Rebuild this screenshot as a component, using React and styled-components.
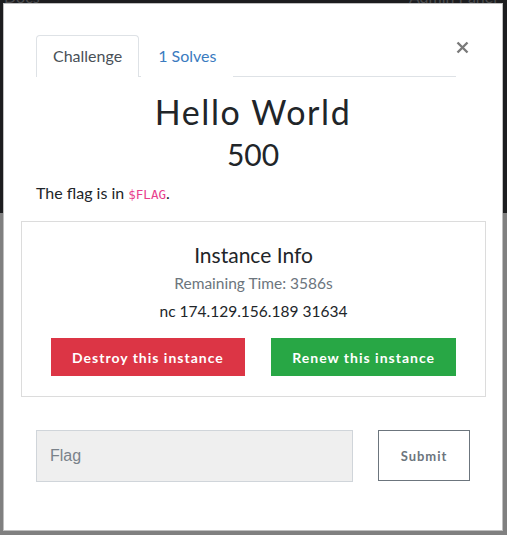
import React from 'react'
import styled, { createGlobalStyle } from 'styled-components'

const GlobalStyle = createGlobalStyle`
  html, body {
    margin: 0;
    padding: 0;
    background: #808080;
  }
  body {
    font-family: Lato, "Noto Sans", sans-serif;
    color: #212529;
  }
`

const Page = styled.div`
  position: relative;
  width: 507px;
  height: 535px;
  overflow: hidden;
  display: flex;
  flex-direction: column;
`

const Hero = styled.div`
  height: 213px;
  background: #1c1d1f;
  display: flex;
  justify-content: space-between;
  align-items: flex-start;
  padding: 0 10px 0 0;
  box-sizing: border-box;
`

const NavText = styled.span`
  font-size: 16px;
  line-height: 16px;
  margin-top: -11px;
  color: #4a4b4d;
  margin-left: ${(p) => p.left || 0}px;
`

const Rest = styled.div`
  flex: 1;
  background: #808080;
`

const Modal = styled.div`
  position: absolute;
  left: 3px;
  top: 3px;
  width: 500px;
  height: 528px;
  box-sizing: border-box;
  background: #fff;
  border: 1px solid rgba(0, 0, 0, 0.25);
  padding: 31px 32px 0 32px;
  display: flex;
  flex-direction: column;
`

const Header = styled.div`
  display: flex;
  align-items: flex-start;
`

const Tabs = styled.div`
  flex: 1;
  display: flex;
  border-bottom: 1px solid #dee2e6;
`

const Tab = styled.div`
  padding: 10px 16px 11px;
  line-height: 20px;
  font-size: 16px;
  border: 1px solid ${(p) => (p.active ? '#dee2e6' : 'transparent')};
  border-bottom: none;
  border-radius: 4px 4px 0 0;
  color: ${(p) => (p.active ? '#495057' : '#3a7bbf')};
  background: #fff;
  margin-bottom: -1px;
  margin-left: ${(p) => (p.active ? 0 : 2)}px;
`

const Close = styled.svg`
  width: 13px;
  height: 13px;
  margin-top: 6px;
  margin-right: 1px;
`

const Title = styled.h2`
  margin: 15px 0 0;
  text-align: center;
  font-weight: 400;
  font-size: 34px;
  letter-spacing: 1.6px;
  line-height: 40px;
  color: #212529;
`

const Points = styled.h3`
  margin: 3px 0 0;
  text-align: center;
  font-weight: 400;
  font-size: 30px;
  line-height: 38px;
  color: #212529;
`

const Description = styled.p`
  margin: 8px 0 0;
  font-size: 16px;
  line-height: 24px;
`

const Code = styled.code`
  font-family: "DejaVu Sans Mono", "Liberation Mono", monospace;
  font-size: 12.5px;
  color: #e83e8c;
`

const InstanceBox = styled.div`
  margin: 14px -16px 0 -15px;
  border: 1px solid #dcdcdc;
  padding: 19px 29px 20px;
  display: flex;
  flex-direction: column;
  align-items: center;
`

const BoxTitle = styled.div`
  font-size: 21px;
  line-height: 28px;
  color: #212529;
`

const InfoLine = styled.div`
  font-size: 15.5px;
  line-height: 22px;
  margin-top: ${(p) => p.mt || 0}px;
  color: ${(p) => (p.muted ? '#6c757d' : '#212529')};
`

const Actions = styled.div`
  align-self: stretch;
  display: flex;
  justify-content: space-between;
  margin-top: 16px;
`

const ActionButton = styled.button`
  height: 38px;
  padding: 0 21px;
  border: none;
  border-radius: 0;
  font-family: Lato, sans-serif;
  font-weight: 700;
  font-size: 14px;
  letter-spacing: 1px;
  color: #fff;
  background: ${(p) => p.bg};
`

const FlagRow = styled.div`
  display: flex;
  gap: 25px;
  margin-top: 33px;
`

const FlagInput = styled.input`
  width: 317px;
  height: 52px;
  box-sizing: border-box;
  background: #efefef;
  border: 1px solid #d0d5da;
  padding: 0 13px;
  font-family: "Liberation Sans", Arial, sans-serif;
  font-size: 16px;
  outline: none;
  &::placeholder {
    color: #7a828a;
  }
`

const SubmitButton = styled.button`
  width: 92px;
  height: 51px;
  background: #fff;
  border: 1px solid #6c757d;
  border-radius: 0;
  color: #6c757d;
  font-family: Lato, sans-serif;
  font-weight: 700;
  font-size: 13px;
  letter-spacing: 1px;
`

export default function App() {
  return (
    <Page>
      <GlobalStyle />
      <Hero>
        <NavText left={4}>Docs</NavText>
        <NavText left={0}>Admin Panel</NavText>
      </Hero>
      <Rest />
      <Modal>
        <Header>
          <Tabs>
            <Tab active>Challenge</Tab>
            <Tab>1 Solves</Tab>
          </Tabs>
          <Close viewBox="0 0 13 13">
            <path d="M1.5 1.5 L11.5 11.5 M11.5 1.5 L1.5 11.5" stroke="#7a7a7a" strokeWidth="2.4" />
          </Close>
        </Header>
        <Title>Hello World</Title>
        <Points>500</Points>
        <Description>
          The flag is in <Code>$FLAG</Code>.
        </Description>
        <InstanceBox>
          <BoxTitle>Instance Info</BoxTitle>
          <InfoLine muted mt={3}>Remaining Time: 3586s</InfoLine>
          <InfoLine mt={6}>nc 174.129.156.189 31634</InfoLine>
          <Actions>
            <ActionButton bg="#dc3545">Destroy this instance</ActionButton>
            <ActionButton bg="#28a745">Renew this instance</ActionButton>
          </Actions>
        </InstanceBox>
        <FlagRow>
          <FlagInput placeholder="Flag" />
          <SubmitButton>Submit</SubmitButton>
        </FlagRow>
      </Modal>
    </Page>
  )
}
